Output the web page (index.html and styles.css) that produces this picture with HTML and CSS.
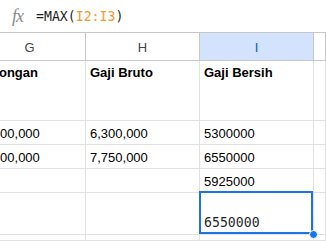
FILE: index.html
```html
<!DOCTYPE html>
<html>

<head>
    <title>Gaji</title>
    <link rel="stylesheet" href="styles.css">
</head>

<body>
    <div class="formula-bar">
        <span class="fx">fx</span>
        <span class="formula">=MAX(<span class="ref">I2:I3</span>)</span>
    </div>

    <div class="sheet">
        <!-- column headers -->
        <div class="head">G</div>
        <div class="head">H</div>
        <div class="head active">I</div>
        <div class="head"></div>

        <!-- row 1 -->
        <div class="cell top bold col-g title-g">Potongan</div>
        <div class="cell top bold">Gaji Bruto</div>
        <div class="cell top bold">Gaji Bersih</div>
        <div class="cell"></div>

        <!-- row 2 -->
        <div class="cell col-g">1,000,000</div>
        <div class="cell">6,300,000</div>
        <div class="cell">5300000</div>
        <div class="cell"></div>

        <!-- row 3 -->
        <div class="cell col-g">1,200,000</div>
        <div class="cell">7,750,000</div>
        <div class="cell">6550000</div>
        <div class="cell"></div>

        <!-- row 4 -->
        <div class="cell col-g"></div>
        <div class="cell"></div>
        <div class="cell">5925000</div>
        <div class="cell"></div>

        <!-- row 5 -->
        <div class="cell col-g"></div>
        <div class="cell"></div>
        <div class="cell selected">
            <span class="editor">6550000</span>
            <span class="handle"></span>
        </div>
        <div class="cell"></div>

        <!-- row 6 -->
        <div class="cell col-g"></div>
        <div class="cell"></div>
        <div class="cell"></div>
        <div class="cell"></div>
    </div>
</body>

</html>
```

FILE: styles.css
```css
/* sheet look */
body {
    margin: 0;
    background-color: #fff;
    font-family: "Liberation Sans", Arial, sans-serif;
    color: #000;
    overflow: hidden;
    height: 241px;
}

.formula-bar {
    height: 32px;
    border-bottom: 1px solid #c7c7c7;
    display: flex;
    align-items: center;
    padding-left: 12px;
}

.fx {
    font-family: "Liberation Serif", serif;
    font-style: italic;
    font-size: 18px;
    color: #8a8a8a;
    width: 24px;
    letter-spacing: -1px;
}

.formula {
    font-family: "DejaVu Sans Mono", monospace;
    font-size: 13.2px;
    color: #1f1f1f;
    padding-top: 1px;
}

.ref {
    color: #f29a2e;
}

.sheet {
    display: grid;
    grid-template-columns: 112px 114px 114px 12px;
    grid-template-rows: 28px 60px 24px 24px 24px 42px 6px;
    margin-left: -26px;
}

.head {
    box-sizing: border-box;
    border-right: 1px solid #c7c7c7;
    border-bottom: 1px solid #c7c7c7;
    display: flex;
    align-items: center;
    justify-content: center;
    font-size: 13px;
    color: #444746;
    padding-top: 1px;
}

.head.active {
    background-color: #d3e3fd;
    color: #0b57d0;
}

.cell {
    box-sizing: border-box;
    border-right: 1px solid #e1e1e1;
    border-bottom: 1px solid #e1e1e1;
    display: flex;
    align-items: flex-end;
    padding: 0 4px 2px;
    font-size: 13px;
    line-height: 17px;
    white-space: nowrap;
    overflow: hidden;
}

.cell.top {
    align-items: flex-start;
    padding-top: 3px;
}

.cell.bold {
    font-weight: bold;
}

.col-g {
    padding-left: 8px;
}

.col-g.title-g {
    padding-left: 4px;
}

.cell.selected {
    position: relative;
    overflow: visible;
}

/* editing box over the active cell */
.editor {
    position: absolute;
    top: -2px;
    left: -1px;
    right: 0;
    bottom: 0;
    border: 2px solid #1a73e8;
    display: flex;
    align-items: flex-end;
    padding: 0 3px 1px;
    font-family: "DejaVu Sans Mono", monospace;
    font-size: 13.2px;
    line-height: 17px;
    color: #1f1f1f;
    background-color: #fff;
}

.handle {
    position: absolute;
    right: -5px;
    bottom: -5px;
    width: 9px;
    height: 9px;
    border-radius: 50%;
    background-color: #1a73e8;
    border: 1px solid #fff;
    box-sizing: border-box;
}
```
